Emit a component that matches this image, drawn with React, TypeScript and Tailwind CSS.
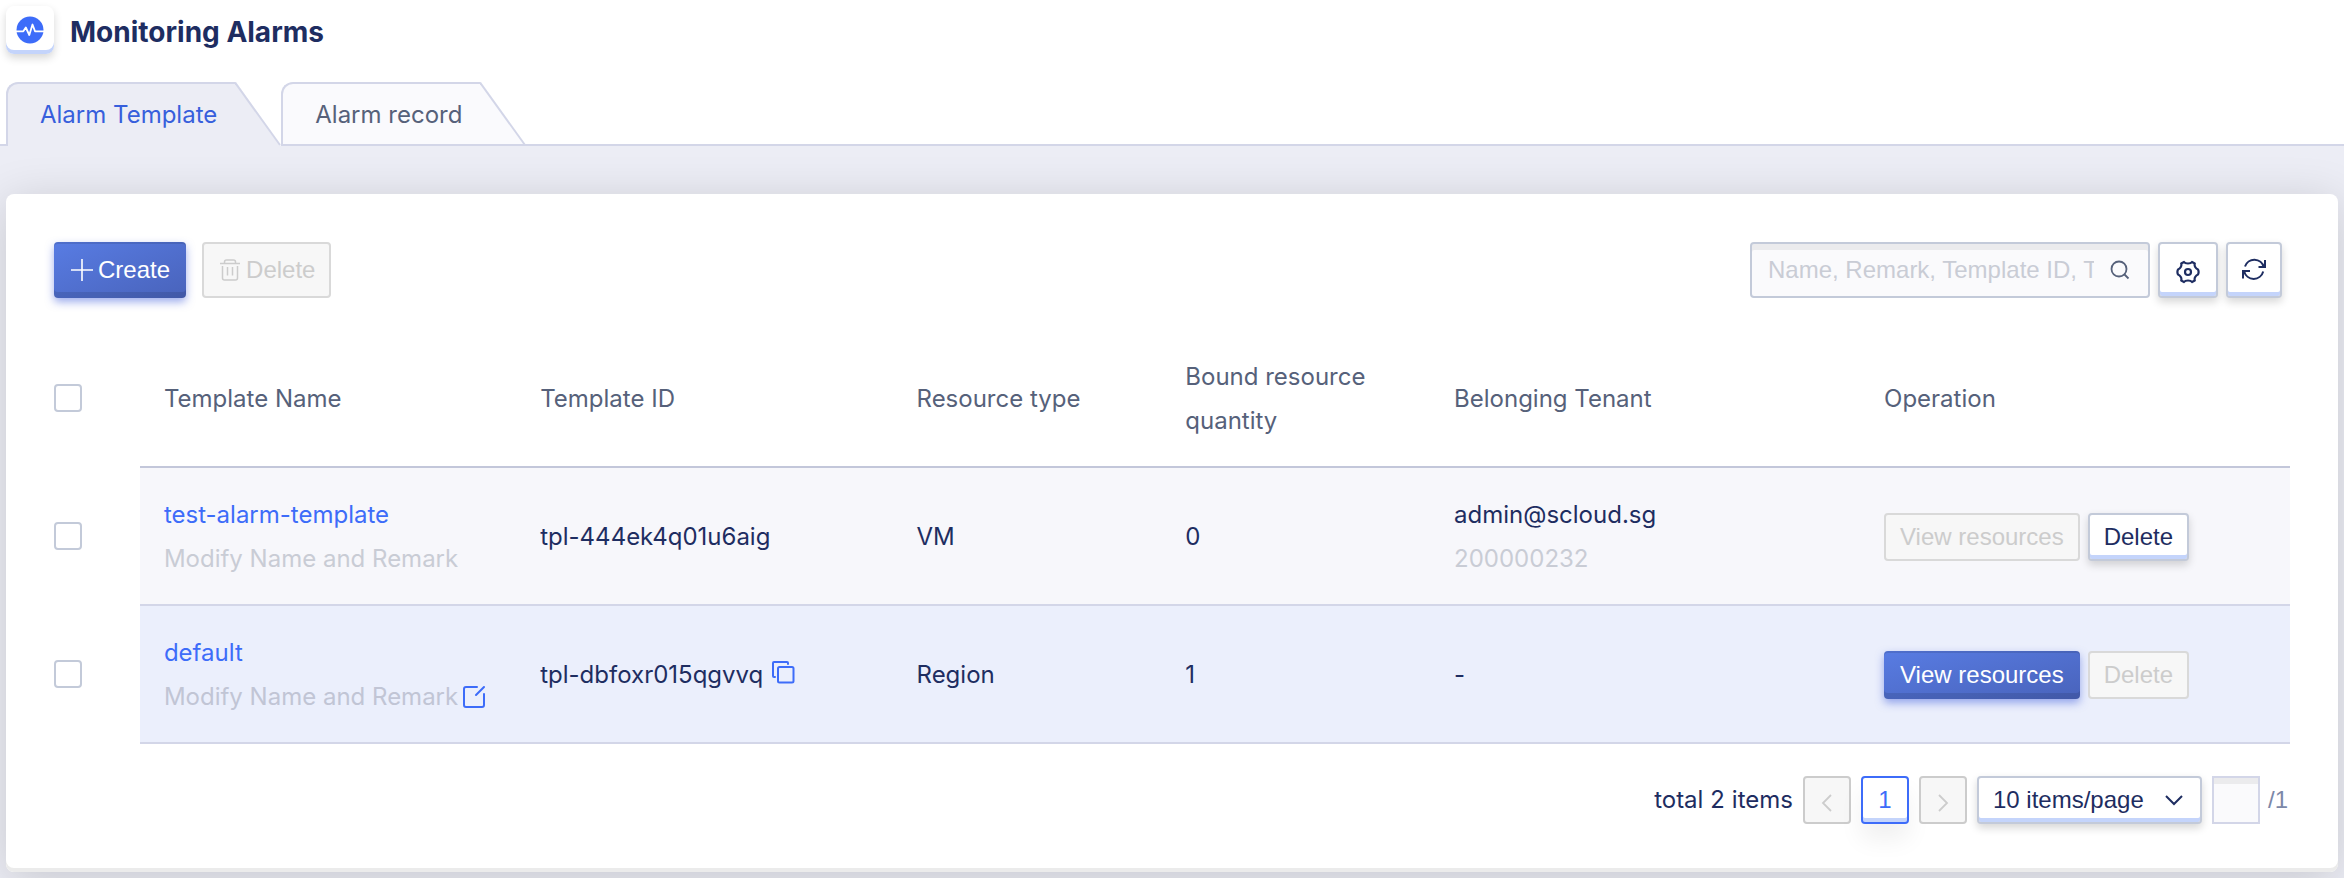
import React from "react";

const templates = [
  {
    name: "test-alarm-template",
    id: "tpl-444ek4q01u6aig",
    type: "VM",
    bound: 0,
    tenant: "admin@scloud.sg",
    tenantId: "200000232",
    active: false,
  },
  {
    name: "default",
    id: "tpl-dbfoxr015qgvvq",
    type: "Region",
    bound: 1,
    tenant: "-",
    tenantId: "",
    active: true,
  },
];

const arial = "font-['Liberation_Sans',Arial,sans-serif] text-2xl leading-7";
const primaryButton =
  "flex items-center gap-1 rounded bg-linear-to-br from-[#587ce3] to-[#4963bb] px-4 text-white shadow-[inset_0_2px_0_rgba(0,0,0,0.1),inset_0_-6px_0_rgba(0,0,0,0.1),0_4px_8px_rgba(61,92,220,0.5)]";
const disabledButton =
  "flex items-center gap-1 rounded border-2 border-[#d9d9d9] bg-[#f7f7f7] px-3.5 text-[#cccccc]";
const plainButton =
  "flex items-center justify-center rounded border-2 border-[#c3cad9] bg-white text-[#1e2d61] shadow-[inset_0_-4px_0_#c4d4fb,0_4px_8px_rgba(0,0,0,0.16)]";
const cellSpacing =
  "[&>*]:pt-[25px] [&>*]:pb-[23px] [&>*:first-child]:pt-6 [&>*:first-child]:pb-[26px] [&>*:not(:first-child)]:border-b-2 [&>*:not(:first-child)]:px-6";

function Checkbox({ label }: { label: string }) {
  return (
    <input
      type="checkbox"
      aria-label={label}
      className="block size-7 appearance-none rounded border-2 border-[#c3cad9] bg-white checked:bg-[#3d6cf9]"
    />
  );
}

function Tab({ label, active }: { label: string; active?: boolean }) {
  return (
    <button
      type="button"
      role="tab"
      aria-selected={!!active}
      className={active ? "flex h-16 text-[#375fdc]" : "flex h-16 text-[#56617a]"}
    >
      <span
        className={
          active
            ? "flex h-full items-center rounded-tl-xl border-t-2 border-l-2 border-[#d3d6e8] bg-[#ecedf5] pr-[18px] pl-8"
            : "flex h-full items-center rounded-tl-xl border-t-2 border-b-2 border-l-2 border-[#d3d6e8] bg-[#fafafd] pt-0.5 pr-[18px] pl-8"
        }
      >
        {label}
      </span>
      <svg width="46" height="64" viewBox="0 0 46 64" aria-hidden="true">
        <path d="M0 0L1 0L46 64H0Z" fill={active ? "#ecedf5" : "#fafafd"} />
        <path d="M0 0.5L45 63" stroke="#d3d6e8" strokeWidth="2" fill="none" />
        {!active && <path d="M0 63H46" stroke="#d3d6e8" strokeWidth="2" />}
      </svg>
    </button>
  );
}

export default function App() {
  return (
    <div className="bg-white font-['Inter',sans-serif] text-2xl leading-[44px] text-[#1e2d61]">
      <header className="flex h-[82px] items-start gap-4 px-1.5 pt-1.5">
        <div className="flex size-12 items-center justify-center rounded-lg bg-white shadow-[inset_0_-4px_0_#c4d4fb,0_4px_8px_rgba(0,0,0,0.16)]">
          <svg width="28" height="28" viewBox="0 0 28 28" fill="none" aria-hidden="true">
            <circle cx="14" cy="14" r="13.5" fill="#3d6cf9" />
            <path
              d="M0 15.300H7.300L9.800 11.500L13.300 19L16.500 8.500L19 15.300H28"
              stroke="white"
              strokeWidth="1.800"
              strokeLinejoin="round"
            />
          </svg>
        </div>
        <h1 className="text-[28px] leading-[52px] font-bold">Monitoring Alarms</h1>
      </header>

      <div role="tablist" className="flex">
        <span className="w-1.5 border-b-2 border-[#d3d6e8]" />
        <Tab label="Alarm Template" active />
        <Tab label="Alarm record" />
        <span className="flex-1 border-b-2 border-[#d3d6e8]" />
      </div>

      <main className="overflow-hidden bg-[#ecedf5] px-1.5 pt-12 pb-1.5">
        <section className="rounded-lg bg-white px-12 pt-12 pb-12 shadow-[inset_0_-4px_0_#ebebeb,0_8px_48px_rgba(0,0,0,0.16)]">
          <div className="flex items-center justify-between pr-2">
            <div className="flex gap-4">
              <button type="button" className={`${primaryButton} ${arial} h-14`}>
                <svg width="24" height="24" viewBox="0 0 24 24" stroke="currentColor" strokeWidth="1.600" aria-hidden="true">
                  <path d="M1 12H23M12 1V23" />
                </svg>
                Create
              </button>
              <button type="button" disabled className={`${disabledButton} ${arial} h-14`}>
                <svg width="24" height="24" viewBox="0 0 24 24" fill="none" stroke="currentColor" strokeWidth="1.500" aria-hidden="true">
                  <path d="M2 5.500H22M6.500 5.500V4Q6.500 2 8.500 2H15.500Q17.500 2 17.500 4V5.500M4.500 8V20Q4.500 22 6.500 22H17.500Q19.500 22 19.500 20V8M9.500 9V17.500M14.500 9V17.500" />
                </svg>
                Delete
              </button>
            </div>
            <div className="flex gap-2">
              <label className="flex h-14 w-[400px] items-center gap-4 rounded border-2 border-[#c3cad9] bg-[#fafafc] pr-[18px] pl-4 shadow-[inset_0_6px_0_#ebebed]">
                <input
                  type="text"
                  aria-label="Search templates"
                  placeholder="Name, Remark, Template ID, Tenant"
                  className={`${arial} min-w-0 flex-1 bg-transparent outline-none placeholder:text-[#c9ccd5]`}
                />
                <svg width="20" height="20" viewBox="0 0 20 20" fill="none" stroke="#56617a" strokeWidth="1.800" aria-hidden="true">
                  <circle cx="9" cy="9" r="7.500" />
                  <path d="M14 14L18.500 18.500" />
                </svg>
              </label>
              <button type="button" aria-label="Settings" className={`${plainButton} h-14 w-[60px] pt-1`}>
                <svg width="24" height="24" viewBox="0 0 24 24" fill="none" stroke="currentColor" strokeWidth="2.200" strokeLinejoin="round" aria-hidden="true">
                  <path d="M8 2Q9 3.500 12 3.500T16 2L18.800 3.500Q18.200 5.200 19.200 7T22 9.500Q23.200 12 22 14.500Q20.200 15.200 19.200 17T18.800 20.500L16 22Q15 20.500 12 20.500T8 22L5.200 20.500Q5.800 18.800 4.800 17T2 14.500Q0.800 12 2 9.500Q3.800 8.800 4.800 7T5.200 3.500Z" />
                  <circle cx="12" cy="12" r="3" />
                </svg>
              </button>
              <button type="button" aria-label="Refresh" className={`${plainButton} size-14`}>
                <svg width="24" height="24" viewBox="0 0 24 24" fill="none" stroke="currentColor" strokeWidth="2" aria-hidden="true">
                  <path d="M3 8.500A9.800 9.800 0 0 1 21.800 9M23 2V9H16.500M21.200 13.500A9.800 9.800 0 0 1 2.200 13.500M1 20.500V13H8" />
                </svg>
              </button>
            </div>
          </div>

          <table className="mt-8 w-full table-fixed border-separate border-spacing-0 text-left">
            <colgroup>
              <col />
              <col className="w-[16.83%]" />
              <col className="w-[16.83%]" />
              <col className="w-[12.02%]" />
              <col className="w-[12.02%]" />
              <col className="w-[19.23%]" />
              <col className="w-[19.23%]" />
            </colgroup>
            <thead>
              <tr className={`${cellSpacing} text-[#56617a] [&>th]:border-[#c3c7da] [&>th]:font-normal`}>
                <th>
                  <Checkbox label="Select all templates" />
                </th>
                <th>Template Name</th>
                <th>Template ID</th>
                <th>Resource type</th>
                <th>Bound resource quantity</th>
                <th>Belonging Tenant</th>
                <th>Operation</th>
              </tr>
            </thead>
            <tbody>
              {templates.map((t) => (
                <tr
                  key={t.id}
                  className={`${cellSpacing} [&>td]:border-[#d3d6e8] ${
                    t.active
                      ? "[&>td:not(:first-child)]:bg-[#ebeffc]"
                      : "[&>td:not(:first-child)]:bg-[#f7f7fb]"
                  }`}
                >
                  <td>
                    <Checkbox label={`Select ${t.name}`} />
                  </td>
                  <td>
                    <a href="#" className="block text-[#3d6cf9]">
                      {t.name}
                    </a>
                    <div className="flex items-center gap-1 whitespace-nowrap">
                      <span className={t.active ? "text-[#c1c5d5]" : "text-[#c9ccd5]"}>Modify Name and Remark</span>
                      {t.active && (
                        <button type="button" aria-label="Edit">
                          <svg width="24" height="24" viewBox="0 0 24 24" fill="none" stroke="#3d6cf9" strokeWidth="2" strokeLinecap="round" aria-hidden="true">
                            <path d="M15 2H4Q2 2 2 4V20Q2 22 4 22H20Q22 22 22 20V9M14 10L22 2" />
                          </svg>
                        </button>
                      )}
                    </div>
                  </td>
                  <td>
                    <div className="flex items-center gap-2">
                      {t.id}
                      {t.active && (
                        <button type="button" aria-label="Copy" className="pb-1.5">
                          <svg width="24" height="24" viewBox="0 0 24 24" fill="none" stroke="#3d6cf9" strokeWidth="2" strokeLinecap="round" aria-hidden="true">
                            <rect x="7" y="7" width="15.500" height="15.500" rx="1.500" />
                            <path d="M17 4V3Q17 2 16 2H3Q2 2 2 3V16Q2 17 3 17H4" />
                          </svg>
                        </button>
                      )}
                    </div>
                  </td>
                  <td>{t.type}</td>
                  <td>{t.bound}</td>
                  <td>
                    {t.tenant}
                    {t.tenantId && <div className="text-[#c9ccd5]">{t.tenantId}</div>}
                  </td>
                  <td>
                    <div className="flex gap-2 whitespace-nowrap">
                      <button
                        type="button"
                        disabled={!t.active}
                        className={`${t.active ? primaryButton : disabledButton} ${arial} h-12`}
                      >
                        View resources
                      </button>
                      <button
                        type="button"
                        disabled={t.active}
                        className={`${t.active ? disabledButton : plainButton} ${arial} h-12 px-3.5`}
                      >
                        Delete
                      </button>
                    </div>
                  </td>
                </tr>
              ))}
            </tbody>
          </table>

          <nav aria-label="Pagination" className="mt-8 flex h-12 items-center justify-end gap-2.5 pr-0.5">
            <span className="tabular-nums">total 2 items</span>
            <button type="button" disabled aria-label="Previous page" className="flex size-12 items-center justify-center rounded border-2 border-[#cccccc] bg-[#f7f7f7] pt-1.5 text-[#cccccc]">
              <svg width="12" height="20" viewBox="0 0 12 20" fill="none" stroke="currentColor" strokeWidth="1.800" aria-hidden="true">
                <path d="M10 2L2 10L10 18" />
              </svg>
            </button>
            <button
              type="button"
              aria-current="page"
              className={`${arial} size-12 rounded border-2 border-[#3d6cf9] bg-white text-[#3d6cf9] shadow-[inset_0_-4px_0_#c4d4fb,0_16px_24px_rgba(0,0,0,0.06)]`}
            >
              1
            </button>
            <button type="button" disabled aria-label="Next page" className="flex size-12 items-center justify-center rounded border-2 border-[#cccccc] bg-[#f7f7f7] pt-1.5 text-[#cccccc]">
              <svg width="12" height="20" viewBox="0 0 12 20" fill="none" stroke="currentColor" strokeWidth="1.800" aria-hidden="true">
                <path d="M2 2L10 10L2 18" />
              </svg>
            </button>
            <div className="grid items-center">
              <select
                aria-label="Items per page"
                className={`${arial} col-start-1 row-start-1 h-12 w-[225px] appearance-none rounded border-2 border-[#c3cad9] bg-white pl-3.5 shadow-[inset_0_-4px_0_#c4d4fb,0_4px_8px_rgba(0,0,0,0.16)]`}
              >
                <option>10 items/page</option>
              </select>
              <svg className="pointer-events-none col-start-1 row-start-1 mr-[18px] justify-self-end" width="20" height="12" viewBox="0 0 20 12" fill="none" stroke="currentColor" strokeWidth="2" aria-hidden="true">
                <path d="M2 2L10 10L18 2" />
              </svg>
            </div>
            <div className="flex items-center gap-2">
              <input
                type="text"
                aria-label="Go to page"
                className={`${arial} size-12 border-2 border-[#d3d6e8] bg-[#fafafc] text-center shadow-[inset_0_6px_0_#ebebed]`}
              />
              <span className={`${arial} text-[#7c88a8]`}>/1</span>
            </div>
          </nav>
        </section>
      </main>
    </div>
  );
}
